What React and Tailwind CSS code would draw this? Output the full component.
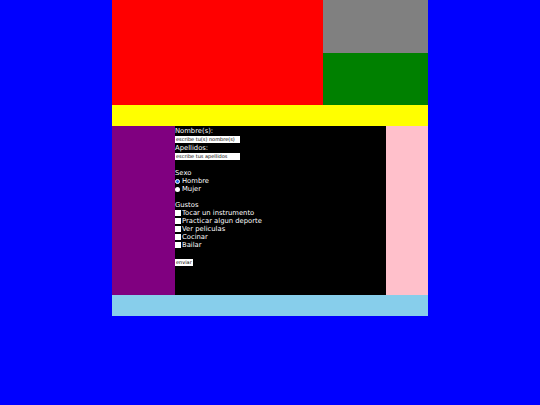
export default function App() {
  const gustos = ["Tocar un instrumento", "Practicar algun deporte", "Ver peliculas", "Cocinar", "Bailar"];
  return (
    <div className="min-h-[405px] w-full bg-[#0000ff]" style={{ fontFamily: '"DejaVu Sans", sans-serif' }}>
      <div className="mx-auto w-[316px]">
        <div className="flex">
          <div className="h-[105px] w-[211px] bg-[#ff0000]" />
          <div className="flex w-[105px] flex-col">
            <div className="h-[53px] bg-[#808080]" />
            <div className="h-[52px] bg-[#008000]" />
          </div>
        </div>
        <div className="h-[21px] bg-[#ffff00]" />
        <div className="flex h-[169px]">
          <div className="w-[63px] bg-[#800080]" />
          <div className="w-[211px] bg-black pt-[1px] text-[6.8px] leading-[8px] text-white">
            <div>Nombre(s):</div>
            <div className="my-[1px] h-[7px] w-[65px] bg-white text-[5px] leading-[7px] text-black pl-[1px]">escribe tu(s) nombre(s)</div>
            <div>Apellidos:</div>
            <div className="my-[1px] h-[7px] w-[65px] bg-white text-[5px] leading-[7px] text-black pl-[1px]">escribe tus apellidos</div>
            <div className="h-[8px]" />
            <div>Sexo</div>
            <div className="flex items-center">
              <span className="mr-[2px] h-[5px] w-[5px] rounded-full border-[1.5px] border-white bg-[#1e6fe6]" />
              Hombre
            </div>
            <div className="flex items-center">
              <span className="mr-[2px] h-[5px] w-[5px] rounded-full bg-white" />
              Mujer
            </div>
            <div className="h-[8px]" />
            <div>Gustos</div>
            {gustos.map((g) => (
              <div key={g} className="flex items-center">
                <span className="mr-[1px] h-[6px] w-[6px] bg-white" />
                {g}
              </div>
            ))}
            <div className="h-[9px]" />
            <div className="inline-block bg-white px-[1px] text-[5px] leading-[7px] text-black">enviar</div>
          </div>
          <div className="w-[42px] bg-[#ffc0cb]" />
        </div>
        <div className="h-[21px] bg-[#87ceeb]" />
      </div>
    </div>
  );
}
